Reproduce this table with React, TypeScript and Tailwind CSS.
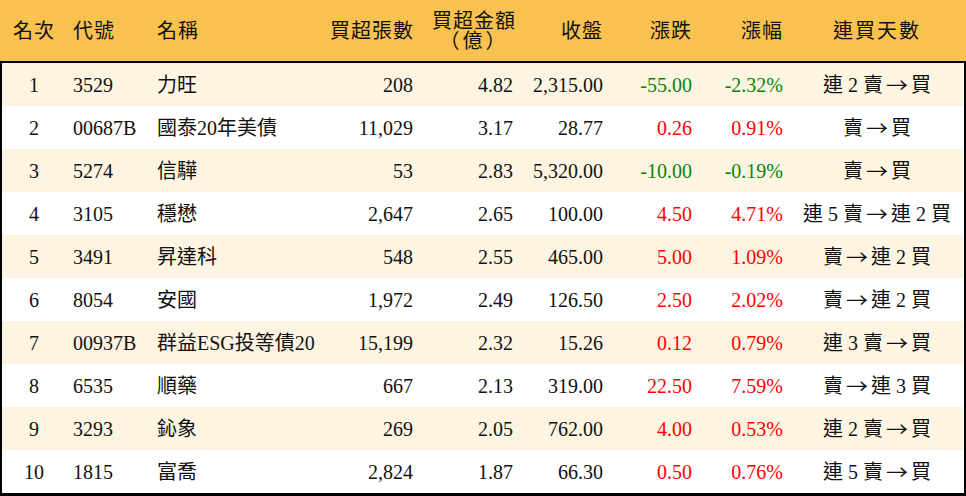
const rows = [
  { rank: "1", code: "3529", name: "力旺", lots: "208", amount: "4.82", close: "2,315.00", change: "-55.00", pct: "-2.32%", streak: "連 2 賣 → 買" },
  { rank: "2", code: "00687B", name: "國泰20年美債", lots: "11,029", amount: "3.17", close: "28.77", change: "0.26", pct: "0.91%", streak: "賣 → 買" },
  { rank: "3", code: "5274", name: "信驊", lots: "53", amount: "2.83", close: "5,320.00", change: "-10.00", pct: "-0.19%", streak: "賣 → 買" },
  { rank: "4", code: "3105", name: "穩懋", lots: "2,647", amount: "2.65", close: "100.00", change: "4.50", pct: "4.71%", streak: "連 5 賣 → 連 2 買" },
  { rank: "5", code: "3491", name: "昇達科", lots: "548", amount: "2.55", close: "465.00", change: "5.00", pct: "1.09%", streak: "賣 → 連 2 買" },
  { rank: "6", code: "8054", name: "安國", lots: "1,972", amount: "2.49", close: "126.50", change: "2.50", pct: "2.02%", streak: "賣 → 連 2 買" },
  { rank: "7", code: "00937B", name: "群益ESG投等債20", lots: "15,199", amount: "2.32", close: "15.26", change: "0.12", pct: "0.79%", streak: "連 3 賣 → 買" },
  { rank: "8", code: "6535", name: "順藥", lots: "667", amount: "2.13", close: "319.00", change: "22.50", pct: "7.59%", streak: "賣 → 連 3 買" },
  { rank: "9", code: "3293", name: "鈊象", lots: "269", amount: "2.05", close: "762.00", change: "4.00", pct: "0.53%", streak: "連 2 賣 → 買" },
  { rank: "10", code: "1815", name: "富喬", lots: "2,824", amount: "1.87", close: "66.30", change: "0.50", pct: "0.76%", streak: "連 5 賣 → 買" },
]

const cols = "grid grid-cols-[64px_84px_180px_90px_100px_90px_89px_91px_1fr]"

function Streak({ text }: { text: string }) {
  const [from, to] = text.split(" → ")
  return (
    <span className="inline-flex items-center gap-[4px] whitespace-nowrap">
      <span>{from}</span>
      <span className="font-['Noto_Sans_CJK_TC',sans-serif] scale-x-[1.1]">→</span>
      <span>{to}</span>
    </span>
  )
}

export default function App() {
  return (
    <div className="w-[966px] h-[496px] bg-white text-[20px] text-[#111] font-['Liberation_Serif','Noto_Sans_CJK_TC',serif]">
      <div className={`${cols} h-[61px] px-[2px] bg-[#f8c150] items-center whitespace-nowrap`}>
        <div className="text-center tracking-[1px]">名次</div>
        <div className="pl-[7px] tracking-[1px]">代號</div>
        <div className="pl-[7px] tracking-[1px]">名稱</div>
        <div className="text-right pr-[7px] tracking-[1px]">買超張數</div>
        <div className="text-center pl-[8px] leading-[20px] tracking-[1px]">
          <div>買超金額</div>
          <div className="tracking-[3px]">（億）</div>
        </div>
        <div className="text-right pr-[7px] tracking-[1px]">收盤</div>
        <div className="text-right pr-[7px] tracking-[1px]">漲跌</div>
        <div className="text-right pr-[7px] tracking-[1px]">漲幅</div>
        <div className="text-center tracking-[2px]">連買天數</div>
      </div>
      <div className="border-2 border-b-[3px] border-black">
        {rows.map((r, i) => {
          const color = r.change.startsWith("-") ? "text-[#0a850a]" : "text-[#ff0000]"
          return (
            <div key={r.rank} className={`${cols} h-[43px] items-center ${i % 2 === 0 ? "bg-[#fdf5e1]" : "bg-white"}`}>
              <div className="text-center">{r.rank}</div>
              <div className="pl-[7px]">{r.code}</div>
              <div className="pl-[7px] whitespace-nowrap">{r.name}</div>
              <div className="text-right pr-[7px]">{r.lots}</div>
              <div className="text-right pr-[7px]">{r.amount}</div>
              <div className="text-right pr-[7px]">{r.close}</div>
              <div className={`text-right pr-[7px] ${color}`}>{r.change}</div>
              <div className={`text-right pr-[7px] ${color}`}>{r.pct}</div>
              <div className="text-center">
                <Streak text={r.streak} />
              </div>
            </div>
          )
        })}
      </div>
    </div>
  )
}
